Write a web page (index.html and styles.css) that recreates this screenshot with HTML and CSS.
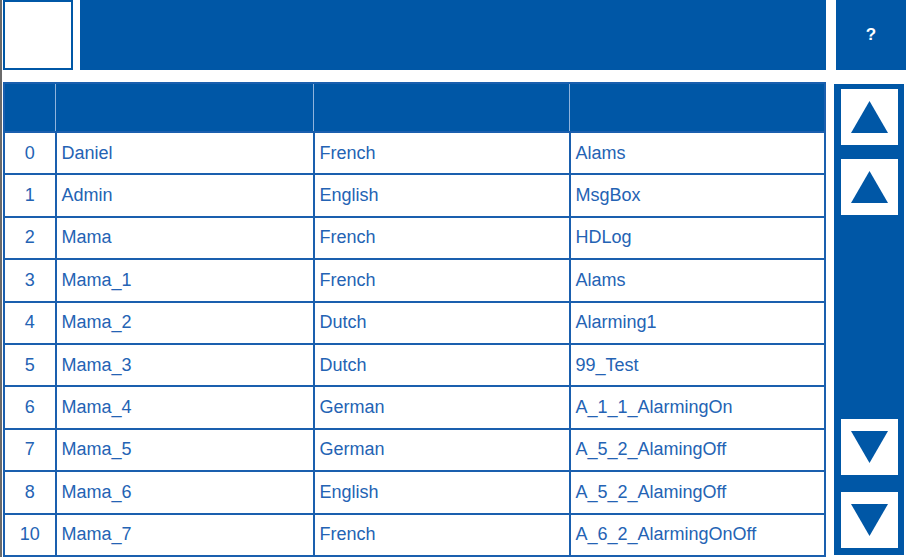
FILE: index.html
```html
<!DOCTYPE html>
<html lang="en">
<head>
    <meta charset="UTF-8">
    <meta name="viewport" content="width=device-width, initial-scale=1.0">
    <title>Users</title>
    <link rel="stylesheet" href="styles.css">
</head>
<body>
    <div class="topbar">
        <div class="logo"></div>
        <div class="titlebar"></div>
        <div class="help">?</div>
    </div>
    <div class="main">
        <table class="liste">
            <thead>
                <tr>
                    <th class="nr"></th>
                    <th class="name"></th>
                    <th class="lang"></th>
                    <th></th>
                </tr>
            </thead>
            <tbody>
                <tr><td class="nr">0</td><td>Daniel</td><td>French</td><td>Alams</td></tr>
                <tr><td class="nr">1</td><td>Admin</td><td>English</td><td>MsgBox</td></tr>
                <tr><td class="nr">2</td><td>Mama</td><td>French</td><td>HDLog</td></tr>
                <tr><td class="nr">3</td><td>Mama_1</td><td>French</td><td>Alams</td></tr>
                <tr><td class="nr">4</td><td>Mama_2</td><td>Dutch</td><td>Alarming1</td></tr>
                <tr><td class="nr">5</td><td>Mama_3</td><td>Dutch</td><td>99_Test</td></tr>
                <tr><td class="nr">6</td><td>Mama_4</td><td>German</td><td>A_1_1_AlarmingOn</td></tr>
                <tr><td class="nr">7</td><td>Mama_5</td><td>German</td><td>A_5_2_AlamingOff</td></tr>
                <tr><td class="nr">8</td><td>Mama_6</td><td>English</td><td>A_5_2_AlamingOff</td></tr>
                <tr><td class="nr">10</td><td>Mama_7</td><td>French</td><td>A_6_2_AlarmingOnOff</td></tr>
            </tbody>
        </table>
        <div class="scroll">
            <div class="gruppe hoch">
                <button class="knopf"><svg width="37" height="32" viewBox="0 0 37 32"><polygon points="18.5,0 37,32 0,32" fill="#0057a6"/></svg></button>
                <button class="knopf"><svg width="37" height="32" viewBox="0 0 37 32"><polygon points="18.5,0 37,32 0,32" fill="#0057a6"/></svg></button>
            </div>
            <div class="gruppe runter">
                <button class="knopf"><svg width="37" height="32" viewBox="0 0 37 32"><polygon points="0,0 37,0 18.5,32" fill="#0057a6"/></svg></button>
                <button class="knopf"><svg width="37" height="32" viewBox="0 0 37 32"><polygon points="0,0 37,0 18.5,32" fill="#0057a6"/></svg></button>
            </div>
        </div>
    </div>
</body>
</html>
```

FILE: styles.css
```css
body {
    margin: 0;
    height: 557px;
    font-family: "Liberation Sans", Arial, sans-serif;
    border-left: 2px solid #6a6a6a;
    padding-left: 1px;
    background: #fff;
    overflow: hidden;
}
.topbar {
    display: flex;
    height: 70px;
}
.logo {
    width: 66px;
    height: 66px;
    border: 2px solid #0057a6;
    background: #fff;
}
.titlebar {
    width: 746px;
    margin-left: 7px;
    background: #0057a6;
}
.help {
    width: 70px;
    margin-left: 10px;
    background: #0057a6;
    color: #fff;
    font-weight: bold;
    font-size: 17px;
    display: flex;
    align-items: center;
    justify-content: center;
}
.main {
    display: flex;
    margin-top: 12px;
    align-items: flex-start;
}
.liste {
    width: 823px;
    border-collapse: collapse;
    border: 2px solid #1a5fae;
    table-layout: fixed;
}
.liste th {
    height: 47px;
    background: #0057a6;
    padding: 0;
    border-left: 1px solid #8fb3dc;
}
.liste th:first-child {
    border-left: none;
}
.liste th.nr {
    width: 50px;
}
.liste th.name {
    width: 257px;
}
.liste th.lang {
    width: 255px;
}
.liste td {
    height: 40.4px;
    border: 2px solid #1a5fae;
    padding: 0 5px;
    color: #2463b4;
    font-size: 18px;
    white-space: nowrap;
}
.liste td.nr {
    text-align: center;
    padding: 0;
}
.scroll {
    width: 70px;
    height: 471px;
    margin: 2px 0 0 8px;
    background: #0057a6;
    display: flex;
    flex-direction: column;
    justify-content: space-between;
    padding: 5px 0 7px;
    box-sizing: border-box;
}
.gruppe {
    display: flex;
    flex-direction: column;
    align-items: flex-start;
    padding-left: 7px;
}
.hoch {
    gap: 14px;
}
.runter {
    gap: 17px;
}
.knopf {
    width: 57px;
    height: 56px;
    border: none;
    padding: 0;
    background: #fff;
    display: flex;
    align-items: center;
    justify-content: center;
}
```
